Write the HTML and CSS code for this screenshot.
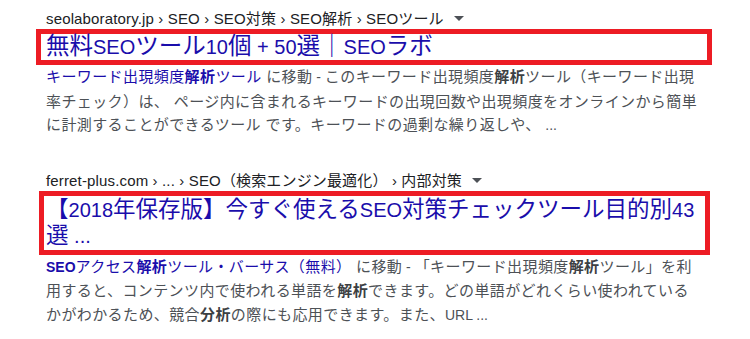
FILE: index.html
```html
<!DOCTYPE html>
<html lang="ja">
<head>
    <meta charset="UTF-8">
    <title>SEO解析ツール 検索結果</title>
    <meta name="viewport" content="width=device-width,initial-scale=1">
    <link rel="stylesheet" href="styles.css">
</head>
<body>
    <div class="results">

        <!--1件目-->
        <div class="result">
            <div class="cite">seolaboratory.jp › SEO › SEO対策 › SEO解析 › SEOツール<span class="caret"></span></div>
            <h3 class="title title-one"><a href="#">無料<span class="en">SEO</span>ツール<span class="en">10</span>個<span class="en"> + 50</span>選｜<span class="en">SEO</span>ラボ</a></h3>
            <div class="snippet"><a class="jump" href="#">キーワード出現頻度<b>解析</b>ツール</a> に移動<span class="en"> - </span>このキーワード出現頻度<b>解析</b>ツール（キーワード出現率チェック）は、 ページ内に含まれるキーワードの出現回数や出現頻度をオンラインから簡単に計測することができるツール です。キーワードの過剰な繰り返しや、 <span class="en">...</span></div>
        </div>

        <!--2件目-->
        <div class="result">
            <div class="cite">ferret-plus.com › ... › SEO（検索エンジン最適化） › 内部対策<span class="caret"></span></div>
            <h3 class="title title-two"><a href="#">【<span class="en">2018</span>年保存版】今すぐ使える<span class="en">SEO</span>対策チェックツール目的別<span class="en">43</span>選<span class="en"> ...</span></a></h3>
            <div class="snippet"><a class="jump" href="#"><b class="en">SEO</b>アクセス<b>解析</b>ツール・バーサス（無料）</a> に移動<span class="en"> - </span>「キーワード出現頻度<b>解析</b>ツール」を利用すると、コンテンツ内で使われる単語を<b>解析</b>できます。どの単語がどれくらい使われているかがわかるため、競合<b>分析</b>の際にも応用できます。また、<span class="en">URL ...</span></div>
        </div>

    </div>
</body>
</html>
```

FILE: styles.css
```css
*{
    padding: 0;
    margin: 0;
}
body{
    background-color: #fff;
    font-family: "Liberation Sans", "Noto Sans CJK JP", sans-serif;
    color: #4d5156;
}
a{
    text-decoration: none;
}
.results{
    padding: 9px 0 0 46px;
}
.result + .result{
    margin-top: 33px;
}

/*
    パンくず
*/
.cite{
    font-size: 15px;
    letter-spacing: 0.15px;
    line-height: 20px;
    color: #202124;
}
.caret{
    display: inline-block;
    width: 0;
    height: 0;
    margin-left: 10px;
    border-left: 5px solid transparent;
    border-right: 5px solid transparent;
    border-top: 5px solid #4d5156;
    vertical-align: 3px;
}

/*
    タイトル（赤枠）
*/
.title{
    box-sizing: border-box;
    font-weight: normal;
    font-size: 22.5px;
    line-height: 26px;
    border: 5px solid #ed1c24;
}
.title a{
    color: #1a0dab;
}
.title .en{
    font-size: 20px;
}
.title-one{
    width: 676px;
    margin-left: -10px;
    padding-left: 5px;
    font-size: 23.5px;
    line-height: 25px;
}
.title-two{
    width: 671px;
    margin-left: -7px;
    padding: 1px 0 1px 2px;
    line-height: 26px;
}

/*
    説明文
*/
.snippet{
    width: 658px;
    font-size: 15px;
    letter-spacing: 0.4px;
    line-height: 23.5px;
}
.snippet .en{
    font-size: 14px;
    letter-spacing: 0;
}
.snippet b{
    color: #3c4043;
}
.snippet .jump{
    color: #1a0dab;
}
.snippet .jump b{
    color: #1a0dab;
}
```
